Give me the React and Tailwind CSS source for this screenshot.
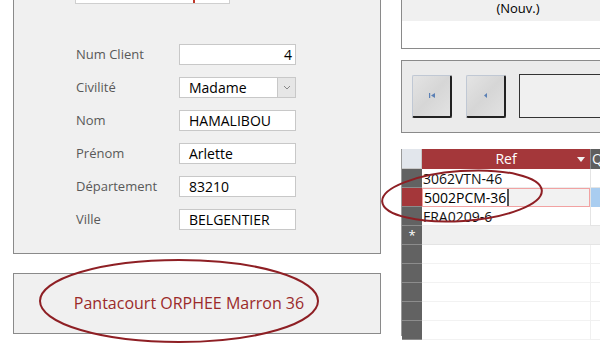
import React from 'react';

const font = { fontFamily: '"Open Sans", "Noto Sans", sans-serif' };

const fields = [
  { label: 'Num Client', value: '4', align: 'right' },
  { label: 'Civilité', value: 'Madame', combo: true },
  { label: 'Nom', value: 'HAMALIBOU' },
  { label: 'Prénom', value: 'Arlette' },
  { label: 'Département', value: '83210' },
  { label: 'Ville', value: 'BELGENTIER' },
];

const rows = ['3062VTN-46', '5002PCM-36', 'FRA0209-6'];

const Field = ({ label, value, align, combo }) => (
  <div className="flex items-center h-[21px]">
    <span className="w-[103px] text-[13px] text-[#595959] leading-none">{label}</span>
    <div className="w-[117px] h-[21px] bg-white border border-[#c8c8c8] flex items-center">
      <span
        className={`flex-1 px-[9px] text-[14px] text-black leading-none ${align === 'right' ? 'text-right pr-[3px]' : ''}`}
      >
        {value}
      </span>
      {combo && (
        <div className="w-[18px] h-[19px] bg-[#e6e6e6] border-l border-[#c8c8c8] flex items-center justify-center">
          <svg width="8" height="5" viewBox="0 0 8 5">
            <path d="M1 1 L4 4 L7 1" fill="none" stroke="#888" strokeWidth="1" />
          </svg>
        </div>
      )}
    </div>
  </div>
);

const NavButton = ({ first }) => (
  <div className="w-[40px] h-[43px] rounded-[2px] border border-[#c0c8d4] border-r-[2px] border-b-[2px] border-r-[#222] border-b-[#222] bg-gradient-to-br from-[#e4e4e4] via-[#d6d6d6] to-[#e2e2e2] flex items-center justify-center">
    <svg width="6" height="5" viewBox="0 0 6 5">
      {first && <rect x="0" y="0" width="1.2" height="5" fill="#5b80b5" />}
      <path d={first ? 'M6 0 L2 2.5 L6 5 Z' : 'M4 0 L1 2.5 L4 5 Z'} fill="#5b80b5" />
    </svg>
  </div>
);

export default function App() {
  return (
    <div className="relative w-[600px] h-[346px] bg-white overflow-hidden flex" style={font}>
      {/* left side */}
      <div className="w-[401px] pl-[13px] flex flex-col shrink-0">
        <div className="w-[368px] h-[254px] bg-[#f0f0f0] border-x border-b border-[#8a8a8a] flex flex-col">
          <div className="ml-[61px] w-[155px] h-[4px] bg-white border-x border-b border-[#cfcfcf] relative">
            <div className="absolute left-[117px] top-0 w-[2px] h-[3px] bg-[#c0392b]" />
          </div>
          <div className="ml-[62px] mt-[40px] flex flex-col gap-[12px]">
            {fields.map((f) => (
              <Field key={f.label} {...f} />
            ))}
          </div>
        </div>
        <div className="mt-[19px] w-[368px] h-[61px] bg-[#f0f0f0] border border-[#8a8a8a] flex items-center justify-center">
          <span className="text-[16px] text-[#9b2a2a] mt-[-2px] -ml-[16px]">Pantacourt ORPHEE Marron 36</span>
        </div>
      </div>

      {/* right side */}
      <div className="flex flex-col w-[240px] shrink-0">
        <div className="w-[234px] h-[49px] border-l border-b border-r border-[#8a8a8a] flex flex-col">
          <div className="h-[21px] bg-[#f0f0f0] flex items-center justify-center text-[13px] text-black leading-none pb-[4px]">
            (Nouv.)
          </div>
          <div className="flex-1 bg-white" />
        </div>
        <div className="mt-[11px] w-[234px] h-[73px] bg-[#ebebeb] border border-[#8a8a8a] flex items-center gap-[14px] pl-[10px] pb-[1px]">
          <NavButton first />
          <NavButton />
          <div className="flex-1 h-[44px] -ml-[1px] bg-[#f0f0f0] border border-[#333]" />
        </div>
        <div className="mt-[16px] w-[234px] h-[187px] border-l border-b border-[#9a9a9a] flex flex-col bg-white">
          {/* header */}
          <div className="flex h-[20px] shrink-0">
            <div className="w-[20px] bg-[#e2e6ec] border-r border-b border-[#c8c8c8]" />
            <div className="w-[168px] bg-[#a4373a] relative flex items-center justify-center text-white text-[14px] leading-none">
              Ref
              <svg className="absolute right-[5px] top-[8px]" width="8" height="5" viewBox="0 0 8 5">
                <path d="M0 0 L8 0 L4 5 Z" fill="#f2f2f2" />
              </svg>
            </div>
            <div className="flex-1 bg-[#5e5e5e] border-l border-[#8a8a8a] text-white text-[14px] leading-none flex items-center pl-[1px]">
              Q
            </div>
          </div>
          {rows.map((r, i) => {
            const sel = i === 1;
            return (
              <div key={r} className="flex h-[19px] shrink-0">
                <div
                  className={`w-[20px] border-b border-[#8c8c8c] ${sel ? 'bg-[#a4373a]' : 'bg-[#626262]'}`}
                />
                {sel ? (
                  <div className="w-[168px] flex border border-[#f2a2a2] bg-[#f2f2f2]">
                    <span className="bg-white pl-[1px] pr-[1px] text-[14px] text-black leading-[17px] border-r-[2px] border-[#555]">
                      {r}
                    </span>
                  </div>
                ) : (
                  <div className="w-[168px] border-b border-[#ececec] pl-[1px] text-[14px] text-[#111] leading-[19px]">
                    {r}
                  </div>
                )}
                <div
                  className={`flex-1 border-l border-[#e4e4e4] ${sel ? 'bg-[#a9cdf0]' : 'bg-white border-b'}`}
                />
              </div>
            );
          })}
          <div className="flex h-[19px] shrink-0">
            <div className="w-[20px] bg-[#626262] border-b border-[#8c8c8c] flex items-center justify-center text-white text-[13px] leading-none">
              *
            </div>
            <div className="flex-1 bg-[#f0f0f0] border-b border-[#e4e4e4]" />
          </div>
          {[0, 1, 2, 3, 4].map((k) => (
            <div key={k} className="flex h-[19px] shrink-0">
              <div className="w-[20px] bg-[#626262] border-b border-[#8c8c8c]" />
              <div className="w-[168px] bg-white border-b border-[#f2f2f2]" />
              <div className="flex-1 bg-white border-l border-b border-[#f0f0f0]" />
            </div>
          ))}
          <div className="flex flex-1">
            <div className="w-[20px] bg-[#626262]" />
            <div className="flex-1 bg-white" />
          </div>
        </div>
      </div>

      {/* annotation ellipses */}
      <svg className="absolute left-0 top-0 pointer-events-none" width="600" height="346">
        <ellipse cx="179" cy="301" rx="139" ry="41" fill="none" stroke="#8e1f24" strokeWidth="2" />
        <ellipse
          cx="462"
          cy="196"
          rx="80"
          ry="25"
          fill="none"
          stroke="#8e1f24"
          strokeWidth="2"
          transform="rotate(-4 462 196)"
        />
      </svg>
    </div>
  );
}
